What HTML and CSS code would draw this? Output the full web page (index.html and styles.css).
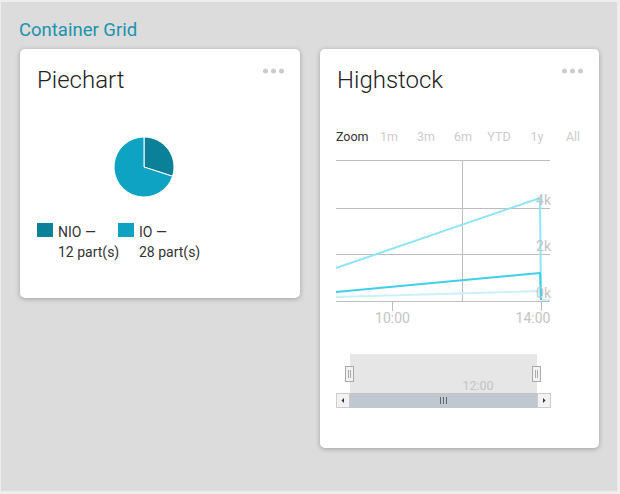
FILE: index.html
```html
<!DOCTYPE html>
<html>
<head>
<meta charset="utf-8">
<link rel="stylesheet" href="styles.css">
</head>
<body>
<div class="frame">
  <h1 class="grid-title">Container Grid</h1>
  <div class="grid">
    <section class="card card-pie">
      <header class="card-head">
        <h2 class="card-title">Piechart</h2>
        <svg class="dots" width="21" height="6" viewBox="0 0 21 6"><circle cx="2.5" cy="3" r="2.5"/><circle cx="10.5" cy="3" r="2.5"/><circle cx="18.5" cy="3" r="2.5"/></svg>
      </header>
      <svg class="pie" width="280" height="120" viewBox="20 94 280 120">
        <path d="M144 167 L144 137 A30 30 0 0 1 172.53 176.27 Z" fill="#0b8199" stroke="#fff" stroke-width="1"/>
        <path d="M144 167 L172.53 176.27 A30 30 0 1 1 144 137 Z" fill="#0ea3c3" stroke="#fff" stroke-width="1"/>
      </svg>
      <div class="legend">
        <div class="legend-item item-nio">
          <span class="swatch sw-nio"></span>
          <span class="legend-text">NIO —<br>12 part(s)</span>
        </div>
        <div class="legend-item">
          <span class="swatch sw-io"></span>
          <span class="legend-text">IO —<br>28 part(s)</span>
        </div>
      </div>
    </section>
    <section class="card card-stock">
      <header class="card-head">
        <h2 class="card-title">Highstock</h2>
        <svg class="dots" width="21" height="6" viewBox="0 0 21 6"><circle cx="2.5" cy="3" r="2.5"/><circle cx="10.5" cy="3" r="2.5"/><circle cx="18.5" cy="3" r="2.5"/></svg>
      </header>
      <svg class="stock" width="279" height="330" viewBox="320 94 279 330">
        <g class="range" font-size="12.5">
          <text x="336" y="141" fill="#333">Zoom</text>
          <text x="389" y="141" fill="#ccc" text-anchor="middle">1m</text>
          <text x="426" y="141" fill="#ccc" text-anchor="middle">3m</text>
          <text x="463" y="141" fill="#ccc" text-anchor="middle">6m</text>
          <text x="499" y="141" fill="#ccc" text-anchor="middle">YTD</text>
          <text x="537" y="141" fill="#ccc" text-anchor="middle">1y</text>
          <text x="573" y="141" fill="#ccc" text-anchor="middle">All</text>
        </g>
        <g stroke="#bdbdbd" stroke-width="1" fill="none">
          <path d="M336 160.5 H550"/>
          <path d="M336 208.5 H550"/>
          <path d="M336 254.5 H550"/>
          <path d="M462.5 160 V301"/>
          <path d="M392.5 301 V311"/>
          <path d="M541.5 301 V311"/>
        </g>
        <g fill="none" stroke-width="2" stroke-linejoin="round">
          <path d="M336 297 L540 291 L541 300 L550 300" stroke="#c8f1f9"/>
          <path d="M336 268 L540 198 L541 300" stroke="#8fe4f5"/>
          <path d="M336 292 L540 273 L541 300" stroke="#3fcfe9"/>
        </g>
        <path d="M336 301.5 H550" stroke="#bdbdbd" stroke-width="1"/>
        <g class="ylabels" font-size="14" fill="#c4c4c4" text-anchor="end">
          <text x="551" y="205">4k</text>
          <text x="551" y="251">2k</text>
          <text x="551" y="298">0k</text>
        </g>
        <g class="xlabels" font-size="14" fill="#c4c4c4" text-anchor="middle">
          <text x="392.5" y="323">10:00</text>
          <text x="533" y="323">14:00</text>
        </g>
        <rect x="350" y="354" width="187" height="39" fill="#e6e6e6"/>
        <text x="478" y="390" font-size="12.5" fill="#c4c4c4" text-anchor="middle">12:00</text>
        <g stroke="#aaa" stroke-width="1">
          <rect x="345.5" y="366.5" width="8" height="15" fill="#f2f2f2"/>
          <path d="M348.5 370 V378 M350.5 370 V378"/>
          <rect x="532.5" y="366.5" width="8" height="15" fill="#f2f2f2"/>
          <path d="M535.5 370 V378 M537.5 370 V378"/>
        </g>
        <rect x="350" y="393" width="187" height="15" fill="#bfc8d1"/>
        <path d="M336 393.5 H550" stroke="#c4c4c4"/>
        <g stroke="#666" stroke-width="1">
          <path d="M440.5 397 V404 M443.5 397 V404 M446.5 397 V404"/>
        </g>
        <rect x="336.5" y="393.5" width="13" height="14" fill="#f2f2f2" stroke="#ccc"/>
        <rect x="537.5" y="393.5" width="13" height="14" fill="#f2f2f2" stroke="#ccc"/>
        <path d="M341.5 400.5 L344 398 V403 Z" fill="#333"/>
        <path d="M545.5 400.5 L543 398 V403 Z" fill="#333"/>
      </svg>
    </section>
  </div>
</div>
</body>
</html>
```

FILE: styles.css
```css
html, body {
  margin: 0;
  padding: 0;
}
body {
  background: #eeeeee;
  font-family: Roboto, "Liberation Sans", sans-serif;
  width: 620px;
  height: 494px;
  overflow: hidden;
}
.frame {
  margin: 2px 3px 0 1px;
  height: 489px;
  background: #dcdcdc;
  padding: 17px 0 0 19px;
  box-sizing: border-box;
}
.grid-title {
  margin: 0 0 8px -1px;
  font-size: 18.5px;
  line-height: 22px;
  font-weight: 400;
  color: #1b93af;
}
.grid {
  display: grid;
  grid-template-columns: 280px 279px;
  column-gap: 20px;
  align-items: start;
}
.card {
  background: #fff;
  border-radius: 5px;
  box-shadow: 0 1px 5px rgba(0, 0, 0, 0.28);
  overflow: hidden;
}
.card-pie { height: 249px; }
.card-stock { height: 399px; }
.card-head {
  display: flex;
  justify-content: space-between;
  align-items: flex-start;
  padding: 17px 16px 0 17px;
}
.card-title {
  margin: 0;
  font-size: 24px;
  line-height: 28px;
  font-weight: 300;
  color: #222;
}
.dots {
  display: block;
  margin-top: 2px;
  fill: #cccccc;
}
.pie, .stock {
  display: block;
}
.legend {
  display: flex;
  padding: 8px 0 0 17px;
  font-size: 14px;
  line-height: 20px;
  color: #333;
}
.legend-item {
  display: flex;
  align-items: flex-start;
}
.item-nio {
  width: 81px;
}
.swatch {
  width: 16px;
  height: 14px;
  margin-top: 1px;
  margin-right: 5px;
  flex: none;
}
.sw-nio { background: #0b8199; }
.sw-io { background: #0ea3c3; }
.legend-text {
  white-space: nowrap;
}
.stock text {
  font-family: Roboto, "Liberation Sans", sans-serif;
}
```
